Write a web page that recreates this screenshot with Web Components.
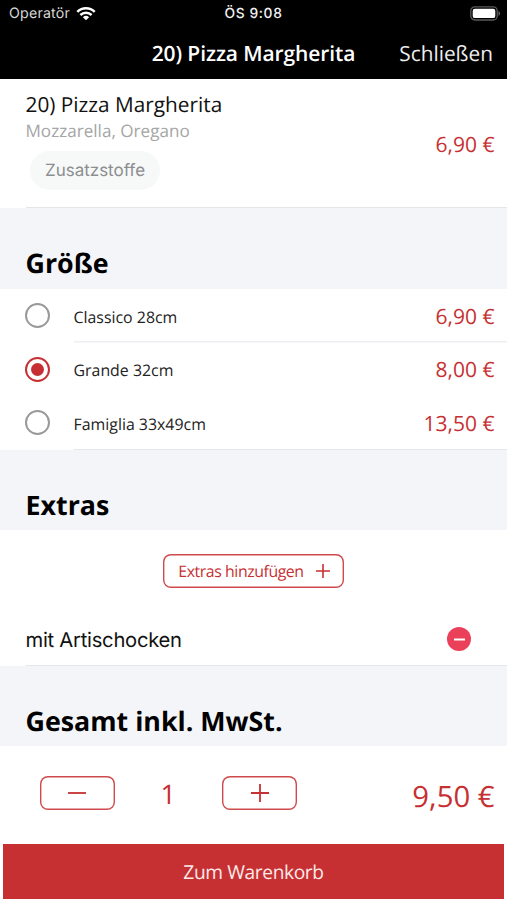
<!DOCTYPE html>
<html lang="de">
<head>
<meta charset="utf-8">
<title>Pizza Margherita</title>
<style>
  html, body { margin: 0; padding: 0; background: #fff; }
  body { width: 507px; height: 900px; overflow: hidden; text-rendering: geometricPrecision; }
</style>
</head>
<body>
<order-screen></order-screen>
<script>
const define = (name, html) => customElements.define(name, class extends HTMLElement {
  constructor() {
    super();
    this.attachShadow({ mode: 'open' }).innerHTML = html;
  }
});

define('status-bar', `
<style>
  :host { display: grid; grid-template-columns: 1fr auto 1fr; align-items: center; height: 27px; padding: 0 6px 0 9px; color: #fff; font: 14px/20px Inter, sans-serif; box-sizing: border-box; }
  .left { display: flex; align-items: center; gap: 6px; color: #d8d8d8; }
  .left span { font-size: 14.2px; letter-spacing: 0.2px; padding-top: 1px; }
  .time { font-weight: 500; font-size: 13.8px; letter-spacing: 0.6px; color: #f2f2f2; margin-right: 3px; padding-top: 1px; }
  .battery { justify-self: end; display: block; }
</style>
<div class="left"><span>Operatör</span>
  <svg width="20" height="15" viewBox="0 0 20 15" fill="none" stroke="#fff" stroke-width="2.5"><path d="M1.3 5.8a12.6 12.6 0 0 1 17.4 0M4.4 9a8.2 8.2 0 0 1 11.2 0"/><path d="M10 14.2 6.9 11.2a4.5 4.5 0 0 1 6.2 0z" fill="#fff" stroke="none"/></svg>
</div>
<span class="time">ÖS 9:08</span>
<svg class="battery" width="31" height="15" viewBox="0 0 31 15"><rect x=".8" y=".8" width="26.4" height="13.2" rx="4" fill="none" stroke="#5b5b5b" stroke-width="1.3"/><rect x="2.7" y="2.7" width="22.6" height="9.4" rx="2.2" fill="#fff"/><path d="M28.5 5v4.8c2-.8 2-4 0-4.8z" fill="#686868"/></svg>`);

define('nav-bar', `
<style>
  :host { display: grid; grid-template-columns: 1fr auto 1fr; align-items: center; height: 52px; padding: 2px 14px 0; color: #fff; font: 21px/28px "Open Sans", sans-serif; box-sizing: border-box; }
  .title { grid-column: 2; font-weight: 600; font-size: 21px; letter-spacing: -0.1px; }
  .action { justify-self: end; color: #eee; font-size: 20.8px; }
</style>
<span class="title"><slot></slot></span><span class="action"><slot name="action"></slot></span>`);

define('price-tag', `
<style>:host { display: block; color: #c73032; font: 21px/28px "Open Sans", sans-serif; white-space: nowrap; }</style><slot></slot>`);

define('product-info', `
<style>
  :host { display: flex; justify-content: space-between; height: 129px; padding: 12px 12.5px 0 25.5px; box-sizing: border-box; background: linear-gradient(#e4e6ea, #e4e6ea) 26px 100% / 100% 1.5px no-repeat #fff; font-family: "Open Sans", sans-serif; }
  .name { font-size: 20.8px; line-height: 28px; color: #111; }
  .desc { font-size: 17.1px; line-height: 24px; margin-top: 1px; color: #a6a6a6; }
  .chip { display: flex; align-items: center; justify-content: center; width: 130px; height: 39px; margin: 7px 0 0 4.5px; padding-top: 1px; box-sizing: border-box; border-radius: 20px; background: #f7f9f9; color: #8c8e90; font: 17px/20px Inter, sans-serif; }
  .price { margin-top: 39.5px; }
</style>
<div><div class="name"><slot></slot></div><div class="desc"><slot name="desc"></slot></div><div class="chip"><slot name="chip"></slot></div></div>
<div class="price"><slot name="price"></slot></div>`);

define('section-title', `
<style>:host { display: flex; align-items: center; box-sizing: border-box; height: 81px; padding: 29px 25.5px 0; background: #f3f5f9; color: #000; font: 700 26.8px/36px "Open Sans", sans-serif; white-space: nowrap; }</style><slot></slot>`);

define('size-option', `
<style>
  :host { display: grid; grid-template-columns: 48.5px 1fr auto; align-items: center; height: 53.6px; padding: 0 12.5px 0 25px; box-sizing: border-box; font: 16px/24px "Open Sans", sans-serif; color: #222; }
  :host([divider]) { background: linear-gradient(#eeeff2, #eeeff2) 74px 100% / 100% 1.5px no-repeat; }
  .label { padding-top: 1.5px; font-size: 15.9px; }
  .price { padding-top: 1.5px; }
  .radio { display: flex; align-items: center; justify-content: center; width: 25px; height: 25px; border: 2.5px solid #999; border-radius: 50%; box-sizing: border-box; }
  :host([checked]) .radio { border-color: #c73032; }
  :host([checked]) .radio::after { content: ""; width: 13px; height: 13px; border-radius: 50%; background: #c73032; }
</style>
<span class="radio"></span><span class="label"><slot></slot></span><div class="price"><slot name="price"></slot></div>`);

define('outline-button', `
<style>:host { display: flex; align-items: center; justify-content: center; width: 75px; height: 34px; box-sizing: border-box; box-shadow: inset 0 0 0 1.4px #cf4a4c; border-radius: 8px; color: #c73032; font: 16px/24px "Open Sans", sans-serif; white-space: nowrap; }</style><slot></slot>`);

customElements.define('line-icon', class extends HTMLElement {
  constructor() {
    super();
    const size = +this.getAttribute('size') || 18;
    const plus = this.getAttribute('kind') === 'plus';
    const weight = this.getAttribute('weight') || 1.8;
    const c = size / 2;
    this.attachShadow({ mode: 'open' }).innerHTML = `
      <style>:host, svg { display: block; }</style>
      <svg width="${size}" height="${size}" fill="none" stroke="currentColor" stroke-width="${weight}"><path d="M0 ${c}H${size}${plus ? `M${c} 0V${size}` : ''}"/></svg>`;
  }
});

define('extras-list', `
<style>
  :host { display: block; height: 136px; padding-top: 24px; box-sizing: border-box; background: linear-gradient(#e4e6ea, #e4e6ea) 26px 100% / 100% 1.5px no-repeat #fff; }
  outline-button { width: 181px; margin-left: 163px; }
  .label { font-size: 15.9px; letter-spacing: -0.45px; margin: 0 12px 0 1px; }
  .row { display: flex; align-items: center; justify-content: space-between; margin-top: 32px; padding: 0 36px 0 25.5px; height: 38px; font: 20.2px/28px Inter, sans-serif; letter-spacing: -0.25px; color: #111; }
  .extra { padding-top: 1px; }
  .remove { display: flex; align-items: center; justify-content: center; width: 24px; height: 24px; border-radius: 50%; background: #eb4059; color: #fff; }
</style>
<outline-button><span class="label">Extras hinzufügen</span><line-icon kind="plus" size="14" weight="1.6"></line-icon></outline-button>
<div class="row"><span class="extra"><slot></slot></span><span class="remove"><line-icon kind="minus" size="11" weight="2"></line-icon></span></div>`);

define('order-total', `
<style>
  :host { display: flex; align-items: flex-start; height: 98px; padding: 30px 12.5px 0 39.5px; box-sizing: border-box; color: #c73032; font-family: "Open Sans", sans-serif; background: #fff; }
  .count { width: 107.5px; text-align: center; font-size: 27px; line-height: 36px; }
  .sum { margin-left: auto; font-size: 29.3px; line-height: 41px; white-space: nowrap; }
</style>
<outline-button><line-icon kind="minus" size="18"></line-icon></outline-button>
<span class="count"><slot name="count"></slot></span>
<outline-button><line-icon kind="plus" size="18"></line-icon></outline-button>
<span class="sum"><slot name="sum"></slot></span>`);

define('cart-button', `
<style>:host { display: flex; align-items: center; justify-content: center; height: 55px; margin: 0 3px; background: #c73032; color: #fbeaea; font: 19.2px/28px "Open Sans", sans-serif; letter-spacing: -0.4px; }</style><span><slot></slot></span>`);

define('order-screen', `
<style>
  :host { display: flex; flex-direction: column; width: 507px; height: 900px; background: #fff; }
  header { background: #000; height: 79px; }
  .sizes { height: 161px; box-sizing: border-box; background: linear-gradient(#e4e6ea, #e4e6ea) 74px 100% / 100% 1.5px no-repeat #fff; }
  .sum-title { height: 80px; }
</style>
<header><status-bar></status-bar><nav-bar>20) Pizza Margherita<span slot="action">Schließen</span></nav-bar></header>
<product-info>20) Pizza Margherita<span slot="desc">Mozzarella, Oregano</span><span slot="chip">Zusatzstoffe</span><price-tag slot="price">6,90 €</price-tag></product-info>
<section-title>Größe</section-title>
<div class="sizes">
  <size-option divider>Classico 28cm<price-tag slot="price">6,90 €</price-tag></size-option>
  <size-option checked>Grande 32cm<price-tag slot="price">8,00 €</price-tag></size-option>
  <size-option>Famiglia 33x49cm<price-tag slot="price">13,50 €</price-tag></size-option>
</div>
<section-title class="sum-title">Extras</section-title>
<extras-list>mit Artischocken</extras-list>
<section-title class="sum-title">Gesamt inkl. MwSt.</section-title>
<order-total><span slot="count">1</span><span slot="sum">9,50 €</span></order-total>
<cart-button>Zum Warenkorb</cart-button>`);
</script>
</body>
</html>
